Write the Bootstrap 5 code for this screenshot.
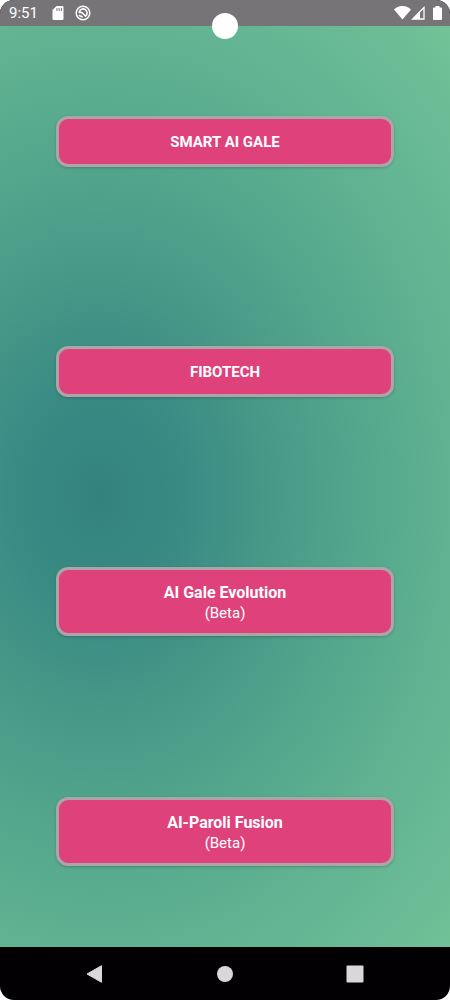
<!DOCTYPE html>
<html lang="en">
<head>
<meta charset="utf-8">
<meta name="viewport" content="width=device-width, initial-scale=1">
<title>Strategies</title>
<link href="https://cdn.jsdelivr.net/npm/bootstrap@5.3.0/dist/css/bootstrap.min.css" rel="stylesheet">
<style>
  body { font-family: Roboto, sans-serif; background: #fff; }
  .phone { border-radius: 14px; background: #020003; }
  .status-bar { height: 26px; padding: 0 8px 0 9px; background: #777477; color: #fff; font-size: 15px; line-height: 26px; }
  .status-bar svg { display: block; }
  .clock { margin-right: 14px; }
  .camera { width: 26px; height: 26px; top: 13px; background: #fff; }
  .screen {
    background: radial-gradient(ellipse 98% 62% at 22% 51%, #33827e 0%, #3a8b84 20%, #479887 38%, #54a78c 60%, #60b292 80%, #6abb95 100%, #76c798 122%);
  }
  .slot { flex: 1 1 0; }
  .btn-strategy {
    --bs-btn-color: #fff;
    --bs-btn-bg: #df427a;
    --bs-btn-border-color: #aba5a8;
    --bs-btn-hover-color: #fff;
    --bs-btn-hover-bg: #cf376d;
    --bs-btn-hover-border-color: #aba5a8;
    --bs-btn-active-color: #fff;
    --bs-btn-active-bg: #c02f62;
    --bs-btn-active-border-color: #aba5a8;
    min-height: 51px;
    padding: 12px 12px 9px;
    border-width: 3px;
    border-radius: 12px;
    font-size: 15px;
    line-height: 21px;
    box-shadow: 0 1px 3px rgba(0, 0, 0, .2);
  }
  .btn-strategy strong { font-size: 16px; }
  .nav-keys { height: 53px; padding: 0 30px; }
  .nav-keys button { height: 53px; }
</style>
</head>
<body>
<div class="phone d-flex flex-column min-vh-100 position-relative overflow-hidden">
  <header class="status-bar d-flex align-items-center justify-content-between">
    <div class="d-flex align-items-center">
      <span class="clock">9:51</span>
      <svg width="12" height="14" viewBox="0 0 11 14" aria-hidden="true"><path fill="#fff" d="M4 0h6a1 1 0 0 1 1 1v12a1 1 0 0 1-1 1H1a1 1 0 0 1-1-1V4z"/><path stroke="#777477" d="M4.500 2v3M6.700 2v3M8.900 2v3"/></svg>
      <svg class="ms-2" width="22" height="16" viewBox="0 0 22 16" aria-hidden="true"><g fill="none" stroke="#fff" stroke-linecap="round"><circle cx="11" cy="8" r="6.800" stroke-width="1.500"/><path stroke-width="1.600" d="M7.200 7a4 4 0 1 1 6.300 4.100M7.500 7.500c1.800-.4 3 .2 3.800 1.500l2.200 2M7.500 10.500l2.600 1.400"/></g></svg>
    </div>
    <div class="d-flex align-items-center">
      <svg width="17" height="14" viewBox="0 0 17 14" aria-hidden="true"><path fill="#fff" d="M0 3.500C5-1.200 12-1.200 17 3.500L8.500 13.500z"/></svg>
      <svg class="me-2" width="14" height="14" viewBox="0 0 14 14" aria-hidden="true"><path fill="none" stroke="#fff" stroke-width="1.300" d="M13 1.500V13H1.600z"/><path fill="#fff" d="M9 5.500V13H1.600z"/></svg>
      <svg width="9" height="14" viewBox="0 0 9 14" aria-hidden="true"><path fill="#fff" d="M2.500 0h4v1.500H8a1 1 0 0 1 1 1V13a1 1 0 0 1-1 1H1a1 1 0 0 1-1-1V2.500a1 1 0 0 1 1-1h1.500z"/></svg>
    </div>
  </header>
  <div class="camera rounded-circle position-absolute start-50 translate-middle-x"></div>

  <main class="screen flex-grow-1 d-flex flex-column">
    <div class="slot d-flex align-items-center justify-content-center">
      <button type="button" class="btn btn-strategy w-75 fw-bold">SMART AI GALE</button>
    </div>
    <div class="slot d-flex align-items-center justify-content-center">
      <button type="button" class="btn btn-strategy w-75 fw-bold">FIBOTECH</button>
    </div>
    <div class="slot d-flex align-items-center justify-content-center">
      <button type="button" class="btn btn-strategy w-75"><strong class="d-block">AI Gale Evolution</strong><span class="d-block">(Beta)</span></button>
    </div>
    <div class="slot d-flex align-items-center justify-content-center">
      <button type="button" class="btn btn-strategy w-75"><strong class="d-block">AI-Paroli Fusion</strong><span class="d-block">(Beta)</span></button>
    </div>
  </main>

  <nav class="nav-keys d-flex" aria-label="System navigation">
    <button type="button" class="btn border-0 p-0 flex-fill d-flex align-items-center justify-content-center" aria-label="Back">
      <svg width="18" height="18" viewBox="0 0 18 18"><path fill="#dad7da" stroke="#dad7da" stroke-linejoin="round" d="M1 9L15.500 .7v16.600z"/></svg>
    </button>
    <button type="button" class="btn border-0 p-0 flex-fill d-flex align-items-center justify-content-center" aria-label="Home">
      <svg width="18" height="18" viewBox="0 0 18 18"><circle cx="9" cy="9" r="8" fill="#dad7da"/></svg>
    </button>
    <button type="button" class="btn border-0 p-0 flex-fill d-flex align-items-center justify-content-center" aria-label="Recent apps">
      <svg width="18" height="18" viewBox="0 0 18 18"><rect x=".5" y=".5" width="17" height="17" rx="1" fill="#dad7da"/></svg>
    </button>
  </nav>
</div>
<script src="https://cdn.jsdelivr.net/npm/bootstrap@5.3.0/dist/js/bootstrap.bundle.min.js"></script>
</body>
</html>
